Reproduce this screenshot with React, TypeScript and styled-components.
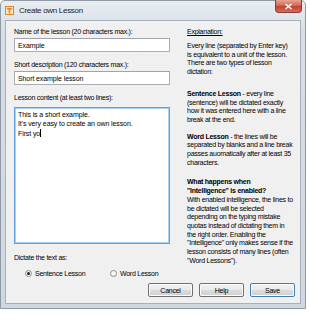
import React from "react";
import styled, { createGlobalStyle } from "styled-components";

const Global = createGlobalStyle`
  html, body { margin: 0; padding: 0; background: #ffffff; }
  body { font-family: "Liberation Sans", Arial, sans-serif; }
`;

const Window = styled.div`
  width: 306px;
  height: 309px;
  box-sizing: border-box;
  border: 1px solid #8f9aa6;
  border-radius: 5px 5px 0 0;
  background: linear-gradient(#e9edf2, #d7dee6 30px, #cfd7e0);
  display: flex;
  flex-direction: column;
  padding: 0 4px 4px 4px;
`;

const TitleBar = styled.div`
  height: 19px;
  display: flex;
  align-items: center;
  gap: 5px;
  position: relative;
`;

const AppIcon = styled.svg`
  width: 9px;
  height: 9px;
  flex: none;
`;

const Title = styled.span`
  font-size: 8px;
  letter-spacing: -0.3px;
  color: #1e1e1e;
`;

const CloseButton = styled.div`
  position: absolute;
  right: -1px;
  top: -1px;
  width: 27px;
  height: 13px;
  box-sizing: border-box;
  border: 1px solid #8c3b35;
  border-top: none;
  border-radius: 0 0 4px 4px;
  background: linear-gradient(#e8a493, #d26a58 45%, #c2412f 55%, #d0705c);
  display: flex;
  align-items: center;
  justify-content: center;
`;

const Client = styled.div`
  flex: 1;
  box-sizing: border-box;
  border: 1px solid #a7b1bc;
  background: #f0f0f0;
  display: flex;
  flex-direction: column;
  padding: 6px 5px 0 8px;
  font-size: 7px;
  letter-spacing: -0.25px;
  color: #000;
  line-height: 9px;
`;

const Main = styled.div`
  display: grid;
  grid-template-columns: 156px 1fr;
  column-gap: 17px;
`;

const LeftColumn = styled.div`
  display: flex;
  flex-direction: column;
`;

const FieldLabel = styled.div<{ $top?: number }>`
  white-space: nowrap;
  margin-top: ${(p) => p.$top ?? 0}px;
  margin-bottom: 2px;
`;

const TextInput = styled.div`
  height: 14px;
  box-sizing: border-box;
  border: 1px solid #abadb3;
  border-top-color: #a0a3aa;
  background: #fff;
  padding: 0 3px;
  display: flex;
  align-items: center;
  white-space: nowrap;
  letter-spacing: -0.1px;
`;

const TextArea = styled.div`
  margin-top: 3px;
  height: 137px;
  box-sizing: border-box;
  border: 1px solid #5d9fe0;
  box-shadow: inset 0 0 0 1px #a9cff3;
  background: #fff;
  padding: 2px 3px;
  white-space: pre;
  line-height: 9.3px;
  letter-spacing: -0.1px;
`;

const Caret = styled.span`
  display: inline-block;
  width: 1px;
  height: 8px;
  background: #000;
  vertical-align: -1px;
`;

const RadioRow = styled.div`
  display: flex;
  align-items: center;
  margin-top: 5px;
  padding-left: 11px;
`;

const RadioOption = styled.label<{ $width: number }>`
  display: flex;
  align-items: center;
  gap: 3px;
  width: ${(p) => p.$width}px;
  white-space: nowrap;
`;

const RadioCircle = styled.span<{ $checked?: boolean }>`
  width: 7px;
  height: 7px;
  box-sizing: border-box;
  border-radius: 50%;
  border: 1px solid #8e8f8f;
  background: radial-gradient(circle, #ffffff 30%, #e2e3e5);
  display: flex;
  align-items: center;
  justify-content: center;
  &::after {
    content: "";
    display: ${(p) => (p.$checked ? "block" : "none")};
    width: 3px;
    height: 3px;
    border-radius: 50%;
    background: #1b1b1b;
  }
`;

const RightColumn = styled.div``;

const Heading = styled.div`
  text-decoration: underline;
  margin-bottom: 1px;
`;

const Para = styled.p<{ $gap: number }>`
  margin: ${(p) => p.$gap}px 0 0 0;
  white-space: nowrap;
  line-height: 8.7px;
`;

const ButtonBar = styled.div`
  display: flex;
  justify-content: flex-end;
  gap: 6px;
  margin-top: 5px;
`;

const Button = styled.button<{ $default?: boolean }>`
  width: 45px;
  height: 14px;
  box-sizing: border-box;
  border: 1px solid ${(p) => (p.$default ? "#3c7fb1" : "#707070")};
  border-radius: 2px;
  background: linear-gradient(#f2f2f2, #ebebeb 45%, #dddddd 50%, #cfcfcf);
  box-shadow: inset 0 0 0 1px #fcfcfc;
  font-family: "Liberation Sans", Arial, sans-serif;
  font-size: 7px;
  letter-spacing: -0.25px;
  color: #000;
  padding: 0;
`;

export default function App() {
  return (
    <>
      <Global />
      <Window>
        <TitleBar>
          <AppIcon viewBox="0 0 9 9">
            <rect x="0.5" y="0.5" width="8" height="8" fill="#f6e6c2" stroke="#d9892b" />
            <rect x="2" y="2" width="5" height="1.5" fill="#e58a1f" />
            <rect x="3.7" y="2" width="1.6" height="5.5" fill="#e58a1f" />
          </AppIcon>
          <Title>Create own Lesson</Title>
          <CloseButton>
            <svg width="9" height="7" viewBox="0 0 9 7">
              <path d="M1.5 1 L7.5 6 M7.5 1 L1.5 6" stroke="#ffffff" strokeWidth="1.6" />
            </svg>
          </CloseButton>
        </TitleBar>
        <Client>
          <Main>
            <LeftColumn>
              <FieldLabel>Name of the lesson (20 characters max.):</FieldLabel>
              <TextInput>Example</TextInput>
              <FieldLabel $top={8}>Short description (120 characters max.):</FieldLabel>
              <TextInput>Short example lesson</TextInput>
              <FieldLabel $top={8}>Lesson content (at least two lines):</FieldLabel>
              <TextArea>
                {"This is a short example.\nIt's very easy to create an own lesson.\nFirst yo"}
                <Caret />
              </TextArea>
              <FieldLabel $top={9}>Dictate the text as:</FieldLabel>
              <RadioRow>
                <RadioOption $width={85}>
                  <RadioCircle $checked />
                  Sentence Lesson
                </RadioOption>
                <RadioOption $width={60}>
                  <RadioCircle />
                  Word Lesson
                </RadioOption>
              </RadioRow>
            </LeftColumn>
            <RightColumn>
              <Heading>Explanation:</Heading>
              <Para $gap={6}>
                Every line (separated by Enter key)
                <br />is equivalent to a unit of the lesson.
                <br />There are two types of lesson
                <br />dictation:
              </Para>
              <Para $gap={13}>
                <b>Sentence Lesson</b> - every line
                <br />(sentence) will be dictated exactly
                <br />how it was entered here with a line
                <br />break at the end.
              </Para>
              <Para $gap={8}>
                <b>Word Lesson</b> - the lines will be
                <br />separated by blanks and a line break
                <br />passes auomatically after at least 35
                <br />characters.
              </Para>
              <Para $gap={11}>
                <b>
                  What happens when
                  <br />"Intelligence" is enabled?
                </b>
                <br />With enabled intelligence, the lines to
                <br />be dictated will be selected
                <br />depending on the typing mistake
                <br />quotas instead of dictating them in
                <br />the right order. Enabling the
                <br />"Intelligence" only makes sense if the
                <br />lesson consists of many lines (often
                <br />"Word Lessons").
              </Para>
            </RightColumn>
          </Main>
          <ButtonBar>
            <Button>Cancel</Button>
            <Button>Help</Button>
            <Button $default>Save</Button>
          </ButtonBar>
        </Client>
      </Window>
    </>
  );
}
